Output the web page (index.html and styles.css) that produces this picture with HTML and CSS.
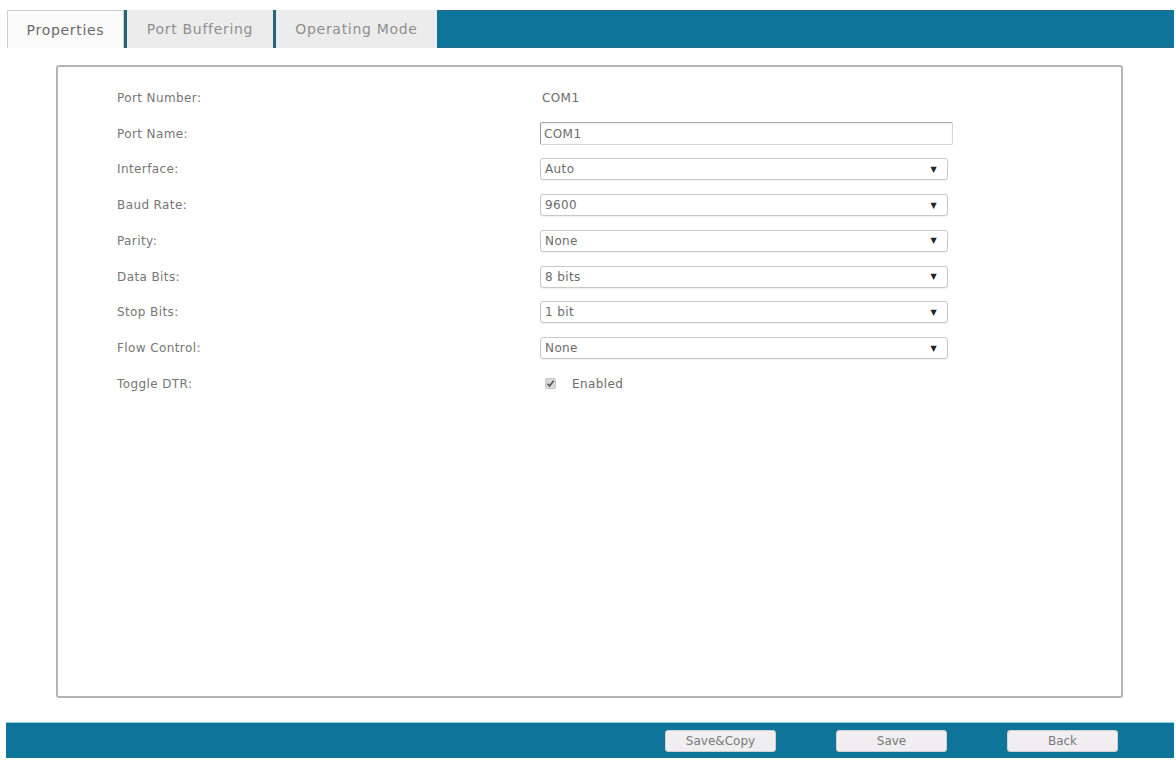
FILE: index.html
```html
<!DOCTYPE html>
<html>
<head lang="en">
    <meta charset="UTF-8">
    <title>Port Settings</title>
    <link rel="stylesheet" href="styles.css">
</head>
<body>
<div class="tabs">
    <a class="tab active">Properties</a>
    <a class="tab">Port Buffering</a>
    <a class="tab">Operating Mode</a>
    <div class="tab-fill"></div>
</div>

<div class="panel">
    <div class="form">
        <div class="label">Port Number:</div>
        <div class="value">COM1</div>

        <div class="label">Port Name:</div>
        <div class="value"><input class="text" type="text" value="COM1"></div>

        <div class="label">Interface:</div>
        <div class="value"><div class="select">Auto<span class="arrow">&#9660;</span></div></div>

        <div class="label">Baud Rate:</div>
        <div class="value"><div class="select">9600<span class="arrow">&#9660;</span></div></div>

        <div class="label">Parity:</div>
        <div class="value"><div class="select">None<span class="arrow">&#9660;</span></div></div>

        <div class="label">Data Bits:</div>
        <div class="value"><div class="select">8 bits<span class="arrow">&#9660;</span></div></div>

        <div class="label">Stop Bits:</div>
        <div class="value"><div class="select">1 bit<span class="arrow">&#9660;</span></div></div>

        <div class="label">Flow Control:</div>
        <div class="value"><div class="select">None<span class="arrow">&#9660;</span></div></div>

        <div class="label">Toggle DTR:</div>
        <div class="value check">
            <span class="box">
                <svg width="9" height="9" viewBox="0 0 9 9"><path d="M1.5 4.8 L3.6 7 L7.6 1.8" fill="none" stroke="#555" stroke-width="1.6"/></svg>
            </span>
            Enabled
        </div>
    </div>
</div>

<div class="footer">
    <a class="btn">Save&amp;Copy</a>
    <a class="btn">Save</a>
    <a class="btn">Back</a>
</div>
</body>
</html>
```

FILE: styles.css
```css
* {
    margin: 0;
    padding: 0;
    box-sizing: border-box;
}

body {
    font-family: "DejaVu Sans", Verdana, sans-serif;
    font-size: 12px;
    color: #666;
    background: #fff;
    width: 1176px;
    height: 760px;
    overflow: hidden;
}

/* tab strip */
.tabs {
    display: flex;
    height: 38px;
    margin: 10px 2px 0 7px;
}

.tab {
    display: flex;
    align-items: center;
    justify-content: center;
    font-size: 14px;
    letter-spacing: 0.7px;
    color: #8f8f8f;
    background: #ececec;
    border-left: 3px solid #24647a;
}

.tab.active {
    width: 117px;
    color: #6a6a6a;
    background: #fbfbfb;
    border: 1px solid #cfcfcf;
    border-bottom: none;
}

.tab:nth-child(2) {
    width: 149px;
}

.tab:nth-child(3) {
    width: 164px;
}

.tab-fill {
    flex: 1;
    background: #0f7499;
    border-top: 1px solid #2a6a80;
    border-bottom: 1px solid #2a6a80;
}

/* main box */
.panel {
    width: 1067px;
    height: 633px;
    margin: 17px 0 0 56px;
    border: 2px solid #b4b4b4;
    border-radius: 3px;
    padding: 13px 0 0 59px;
}

.form {
    display: grid;
    grid-template-columns: 423px 415px;
    grid-auto-rows: 35.75px;
    align-items: center;
}

.label {
    color: #767676;
    letter-spacing: 0.4px;
}

.value {
    color: #6c6c6c;
    letter-spacing: 0.4px;
    padding-left: 2px;
}

.text {
    display: block;
    width: 413px;
    height: 23px;
    margin-left: -2px;
    border: 1px solid #d4d4d4;
    border-top-color: #a9a9a9;
    border-left-color: #999;
    border-radius: 2px;
    box-shadow: inset 0 1px 2px rgba(0, 0, 0, 0.08);
    font-family: "DejaVu Sans", Verdana, sans-serif;
    font-size: 12px;
    letter-spacing: 0.4px;
    color: #6c6c6c;
    padding-left: 3px;
    outline: none;
}

.select {
    display: flex;
    align-items: center;
    justify-content: space-between;
    width: 408px;
    height: 22px;
    margin-left: -2px;
    border: 1px solid #c8c8c8;
    border-radius: 3px;
    box-shadow: 0 1px 1px rgba(0, 0, 0, 0.06);
    padding: 0 10px 0 4px;
    background: #fff;
}

.arrow {
    font-size: 8px;
    color: #222;
}

.check {
    display: flex;
    align-items: center;
    gap: 16px;
    padding-left: 5px;
}

.check .box {
    display: flex;
    align-items: center;
    justify-content: center;
    width: 11px;
    height: 11px;
    background: #d9d9d9;
    border: 1px solid #c4c4c4;
    border-radius: 2px;
}

/* bottom bar */
.footer {
    display: flex;
    justify-content: flex-end;
    align-items: center;
    gap: 60px;
    height: 36px;
    margin: 24px 2px 0 6px;
    padding-right: 56px;
    background: #0f7499;
    border-top: 1px solid #8fd3e6;
}

.btn {
    display: flex;
    align-items: center;
    justify-content: center;
    width: 111px;
    height: 22px;
    background: #f0eef0;
    border: 1px solid #d0d0d0;
    border-radius: 3px;
    color: #7a7a7a;
    font-size: 12px;
}
```
